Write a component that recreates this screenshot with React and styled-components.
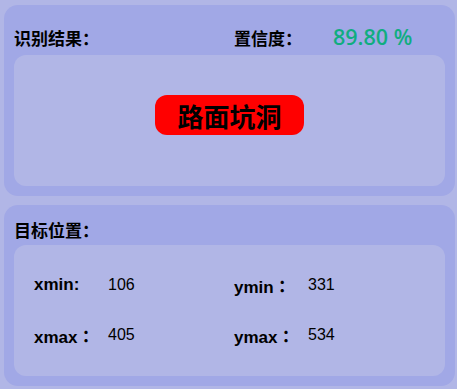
import React from "react";
import styled, { createGlobalStyle } from "styled-components";

const Global = createGlobalStyle`
  html, body { margin: 0; padding: 0; background: #b1b6e6; }
  body { font-family: "Noto Sans CJK SC", "Noto Sans", sans-serif; color: #000; }
`;

const Page = styled.div`
  width: 451px;
  padding: 5px 2px 3px 4px;
  display: flex;
  flex-direction: column;
  gap: 9px;
`;

const Panel = styled.section`
  background: #a1a8e6;
  border-radius: 14px;
  padding: 0 10px 10px;
  display: flex;
  flex-direction: column;
`;

const Header = styled.div`
  height: ${(p) => p.$h}px;
  padding-top: ${(p) => p.$pt}px;
  box-sizing: border-box;
  display: flex;
  align-items: center;
`;

const Title = styled.div`
  font-size: 17px;
  font-weight: 700;
  line-height: 1;
  width: ${(p) => (p.$w ? `${p.$w}px` : "auto")};
  flex-shrink: 0;
`;

const Score = styled.div`
  font-family: "Open Sans", "Noto Sans", sans-serif;
  font-size: 21.5px;
  font-weight: 600;
  color: #10ad80;
  line-height: 1;
`;

const Inner = styled.div`
  background: #b1b6e6;
  border-radius: 12px;
  height: 131px;
  box-sizing: border-box;
`;

const ResultBox = styled(Inner)`
  display: flex;
  justify-content: center;
  padding-top: 40px;
`;

const Badge = styled.div`
  height: 40px;
  padding: 0 22px;
  background: #ff0000;
  border-radius: 12px;
  display: flex;
  align-items: center;
  font-size: 26px;
  font-weight: 700;
  color: #000;
`;

const CoordGrid = styled(Inner)`
  display: grid;
  grid-template-columns: 200px 1fr;
  grid-auto-rows: 30px;
  row-gap: 20px;
  padding: 25px 20px 0;
`;

const Cell = styled.div`
  display: flex;
  align-items: center;
`;

const Label = styled.span`
  width: 74px;
  font-family: "Liberation Sans", Arial, "Noto Sans CJK JP", sans-serif;
  font-size: 17px;
  font-weight: 700;
`;

const Value = styled.span`
  font-family: "Liberation Sans", Arial, sans-serif;
  font-size: 16px;
`;

const coords = [
  ["xmin:", 106],
  ["ymin：", 331],
  ["xmax：", 405],
  ["ymax：", 534],
];

export default function App() {
  return (
    <>
      <Global />
      <Page>
        <Panel>
          <Header $h={50} $pt={14}>
            <Title $w={220}>识别结果：</Title>
            <Title $w={99}>置信度：</Title>
            <Score>89.80 %</Score>
          </Header>
          <ResultBox>
            <Badge>路面坑洞</Badge>
          </ResultBox>
        </Panel>
        <Panel>
          <Header $h={40} $pt={8}>
            <Title>目标位置：</Title>
          </Header>
          <CoordGrid>
            {coords.map(([k, v]) => (
              <Cell key={k}>
                <Label>{k}</Label>
                <Value>{v}</Value>
              </Cell>
            ))}
          </CoordGrid>
        </Panel>
      </Page>
    </>
  );
}
